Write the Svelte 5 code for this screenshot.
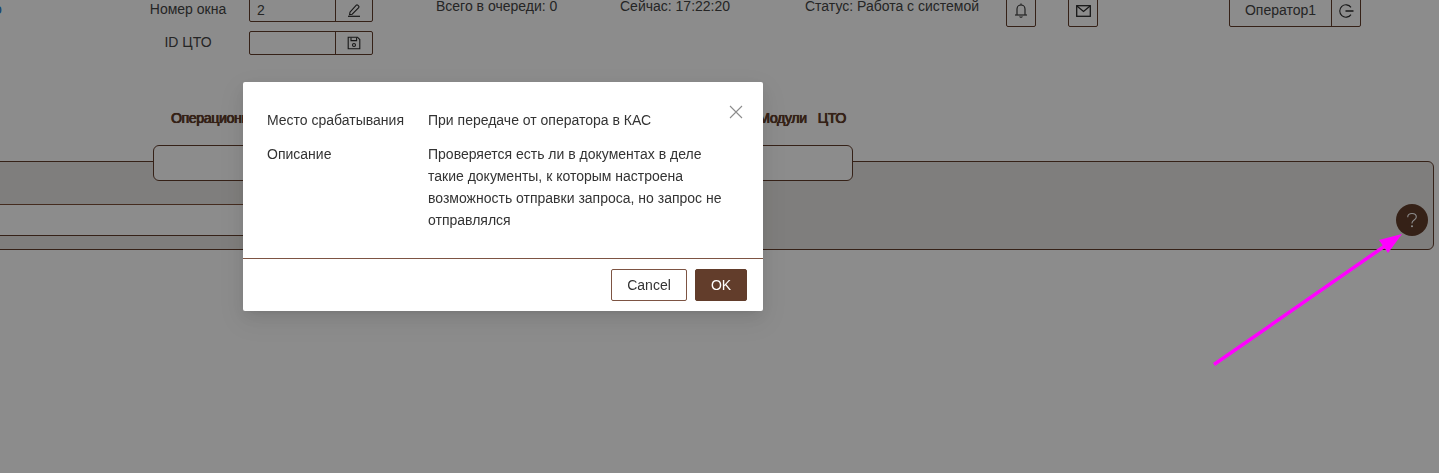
<script>
  const tabsLeft = ['Операционная'];
  const tabsRight = ['Модули', 'ЦТО'];
  const rows = [
    { label: 'Номер окна', value: '2', icon: 'edit' },
    { label: 'ID ЦТО', value: '', icon: 'save' }
  ];
</script>

<div class="page">
  <header class="header">
    <span class="sliver"><span>о</span></span>
    <div class="form">
      {#each rows as row}
        <div class="form-row">
          <span class="label">{row.label}</span>
          <div class="group">
            <span class="field">{row.value}</span>
            <button class="addon" aria-label={row.label}>
              {#if row.icon === 'edit'}
                <svg width="14" height="14" viewBox="0 0 14 14" fill="none" stroke="currentColor" stroke-width="1.100"><path d="M3 9.200 9.300 2.200a1 1 0 0 1 1.400 0l1 1a1 1 0 0 1 0 1.400L5.200 11.200l-2.600.4z"/><path d="M1 13.300h12" stroke-width="1.200"/></svg>
              {:else}
                <svg width="14" height="14" viewBox="0 0 14 14" fill="none" stroke="currentColor" stroke-width="1.100"><path d="M1.200 1.200h9.300l2.300 2.300v9.300H1.200z"/><path d="M4 1.400v3.200h5.600V1.400"/><circle cx="7" cy="9" r="1.500"/></svg>
              {/if}
            </button>
          </div>
        </div>
      {/each}
    </div>
    <div class="stats">
      <span class="stat s1">Всего в очереди: 0</span>
      <span class="stat s2">Сейчас: 17:22:20</span>
      <span class="stat s3">Статус: Работа с системой</span>
    </div>
    <button class="icon-btn" aria-label="Уведомления">
      <svg width="14" height="15" viewBox="0 0 14 15" fill="none" stroke="currentColor" stroke-width="1.100"><path d="M3 11.800V6a4 4 0 0 1 8 0v5.800"/><path d="M1 12h12"/><path d="M5.700 13.400a1.400 1.400 0 0 0 2.600 0"/><path d="M7 .4v1.400"/></svg>
    </button>
    <button class="icon-btn mail" aria-label="Почта">
      <svg width="15" height="12" viewBox="0 0 15 12" fill="none" stroke="currentColor" stroke-width="1.300"><rect x=".7" y=".7" width="13.600" height="10.600"/><path d="M.9.900 7.500 6.400 14.100.9"/></svg>
    </button>
    <div class="user">
      <span class="user-name">Оператор1</span>
      <button class="user-exit" aria-label="Выход">
        <svg width="15" height="14" viewBox="0 0 15 14" fill="none" stroke="currentColor" stroke-width="1.100"><path d="M12 3.400A6.200 6.200 0 1 0 12 10.600"/><path d="M6.500 7h8" stroke-width="1.500"/></svg>
      </button>
    </div>
  </header>

  <nav class="tabs">
    {#each tabsLeft as t}<span class="tab">{t}</span>{/each}
    <span class="spacer"></span>
    {#each tabsRight as t}<span class="tab">{t}</span>{/each}
  </nav>

  <div class="search"></div>

  <section class="panel">
    <div class="card"></div>
    <button class="help" aria-label="Помощь">
      <svg width="12" height="16" viewBox="0 0 12 16" fill="none" stroke="currentColor" stroke-width="1.100"><path d="M1.700 5.200C1.700 3 3.500 1.500 6 1.500s4.300 1.500 4.300 3.500c0 3-4.300 3-4.300 6v.6"/><circle cx="6" cy="14.300" r=".5"/></svg>
    </button>
  </section>
</div>

<div class="mask">
  <div class="dialog">
    <button class="close" aria-label="Закрыть">
      <svg width="14" height="14" viewBox="0 0 14 14" stroke="currentColor" stroke-width="1.100" fill="none"><path d="M1 1l12 12M13 1 1 13"/></svg>
    </button>
    <div class="body">
      <div class="row">
        <span class="key">Место срабатывания</span>
        <span class="val">При передаче от оператора в КАС</span>
      </div>
      <div class="row">
        <span class="key">Описание</span>
        <span class="val">Проверяется есть ли в документах в деле такие документы, к которым настроена возможность отправки запроса, но запрос не отправлялся</span>
      </div>
    </div>
    <div class="footer">
      <button class="btn">Cancel</button>
      <button class="btn primary">OK</button>
    </div>
  </div>
</div>

<svg class="arrow" width="1439" height="473" viewBox="0 0 1439 473" fill="none">
  <path d="M1214 364.500 1392 241" stroke="#ff00ff" stroke-width="3.500"/>
  <path d="M1402 234 1379 240 1388 253z" fill="#ff00ff"/>
</svg>

<style>
  :global(html), :global(body) {
    margin: 0;
    height: 473px;
    overflow: hidden;
    background: #fff;
  }
  :global(body) {
    font-family: "Liberation Sans", Arial, sans-serif;
    font-size: 14px;
    line-height: 22px;
    color: #444;
  }
  button {
    font: inherit;
    padding: 0;
    background: none;
    cursor: pointer;
    color: inherit;
  }
  .page {
    height: 473px;
    overflow: hidden;
  }
  .header {
    display: flex;
    align-items: flex-start;
    margin-top: -6px;
  }
  .sliver {
    flex: 0 0 2px;
    width: 2px;
    overflow: hidden;
    margin-top: 4px;
    margin-right: 125px;
    color: #1677c8;
  }
  .sliver span {
    display: block;
    margin-left: -6px;
  }
  .form {
    display: flex;
    flex-direction: column;
    gap: 9px;
    margin-top: 4px;
  }
  .form-row {
    display: flex;
    align-items: flex-start;
  }
  .label {
    width: 122px;
    text-align: center;
  }
  .group {
    display: flex;
    width: 124px;
    height: 24px;
    box-sizing: border-box;
    border: 1px solid #623d2b;
    border-radius: 2px;
  }
  .field {
    flex: 1;
    padding-left: 7px;
    line-height: 22px;
  }
  .addon {
    flex: 0 0 37px;
    border: 0;
    border-left: 1px solid #623d2b;
    display: flex;
    align-items: center;
    justify-content: center;
    color: #2a2a2a;
  }
  .stats {
    display: flex;
    margin-left: 63px;
    margin-top: 1px;
  }
  .s1 { width: 184px; }
  .s2 { width: 185px; }
  .s3 { width: 201px; }
  .icon-btn {
    width: 30px;
    height: 33px;
    box-sizing: border-box;
    border: 1px solid #623d2b;
    border-radius: 2px;
    display: flex;
    align-items: center;
    justify-content: center;
    color: #2a2a2a;
  }
  .mail { margin-left: 32px; }
  .user {
    display: flex;
    height: 33px;
    box-sizing: border-box;
    width: 132px;
    margin-left: 131px;
    border: 1px solid #623d2b;
    border-radius: 2px;
  }
  .user-name {
    width: 101px;
    text-align: center;
    line-height: 31px;
  }
  .user-exit {
    flex: 1;
    border: 0;
    border-left: 1px solid #623d2b;
    display: flex;
    align-items: center;
    justify-content: center;
    color: #2a2a2a;
  }
  .tabs {
    display: flex;
    gap: 11px;
    width: 675px;
    margin: 52px 0 0 171px;
    letter-spacing: -0.3px;
  }
  .spacer { flex: 1; }
  .tab {
    color: #623d2b;
    font-weight: 400;
    text-shadow: 0.4px 0 0 #623d2b, -0.3px 0 0 #623d2b, 0 0 1px rgba(98, 61, 43, 0.5);
  }
  .search {
    position: relative;
    z-index: 1;
    width: 700px;
    height: 36px;
    box-sizing: border-box;
    margin: 16px 0 0 153px;
    background: #fff;
    border: 1px solid #623d2b;
    border-radius: 6px;
  }
  .panel {
    display: flex;
    align-items: flex-start;
    height: 89px;
    box-sizing: border-box;
    margin: -20px 5px 0 -10px;
    padding: 42px 5px 0 0;
    background: #e8e6e3;
    border: 1px solid #623d2b;
    border-radius: 6px;
  }
  .card {
    width: 500px;
    height: 32px;
    box-sizing: border-box;
    background: #fff;
    border: 1px solid #623d2b;
    border-top-color: #7d4f38;
  }
  .help {
    margin-left: auto;
    width: 32px;
    height: 32px;
    border: 0;
    border-radius: 50%;
    background: #623d2b;
    color: #fff;
    display: flex;
    align-items: center;
    justify-content: center;
  }
  .mask {
    position: fixed;
    inset: 0;
    z-index: 10;
    background: rgba(0, 0, 0, 0.45);
  }
  .dialog {
    position: relative;
    width: 520px;
    margin: 82px 0 0 243px;
    background: #fff;
    border-radius: 2px;
    box-shadow: 0 3px 6px -4px rgba(0,0,0,.12), 0 6px 16px rgba(0,0,0,.08), 0 9px 28px 8px rgba(0,0,0,.05);
    color: #333;
  }
  .close {
    position: absolute;
    top: 23px;
    right: 20px;
    width: 14px;
    height: 14px;
    border: 0;
    color: #8c8c8c;
    display: flex;
  }
  .body {
    display: flex;
    flex-direction: column;
    gap: 12px;
    padding: 27px 24px 27px;
    border-bottom: 1px solid #7d5443;
  }
  .row { display: flex; }
  .key { flex: 0 0 161px; }
  .val { width: 302px; }
  .footer {
    display: flex;
    justify-content: flex-end;
    gap: 8px;
    padding: 10px 16px;
  }
  .btn {
    height: 32px;
    width: 76px;
    box-sizing: border-box;
    border: 1px solid #7d5443;
    border-radius: 2px;
    background: #fff;
    color: #333;
  }
  .primary {
    width: 52px;
    background: #623d2b;
    border-color: #623d2b;
    color: #fff;
  }
  .arrow {
    position: fixed;
    left: 0;
    top: 0;
    z-index: 20;
    pointer-events: none;
  }
</style>
